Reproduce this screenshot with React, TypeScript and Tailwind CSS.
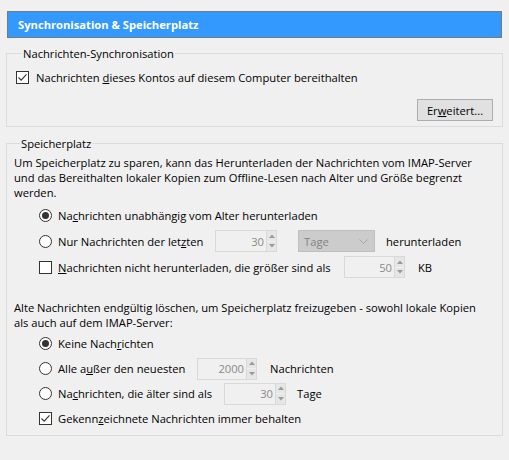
import type { ReactNode } from "react";

const font = "font-['Open_Sans',sans-serif] text-[11.2px] leading-[15px]";

function CheckBox({ checked }: { checked?: boolean }) {
  return (
    <span className="flex h-[13px] w-[13px] shrink-0 items-center justify-center border border-[#333333] bg-white">
      {checked && (
        <svg width="11" height="11" viewBox="0 0 11 11">
          <path d="M1.5 5.5 L4.2 8.2 L9.5 2.3" fill="none" stroke="#333333" strokeWidth="1.1" />
        </svg>
      )}
    </span>
  );
}

function Radio({ checked }: { checked?: boolean }) {
  return (
    <span className="flex h-[13px] w-[13px] shrink-0 items-center justify-center rounded-full border border-[#333333] bg-white">
      {checked && <span className="h-[7px] w-[7px] rounded-full bg-[#333333]" />}
    </span>
  );
}

function SpinBox({ value, width }: { value: string; width: string }) {
  return (
    <div className="flex h-[22px]">
      <div className={`flex items-center justify-end border border-[#d9d9d9] bg-[#f0f0f0] pr-[2px] text-[#8a8a8a] ${width}`}>{value}</div>
      <div className="flex w-[10px] flex-col gap-[1px] border border-l-0 border-[#d9d9d9] bg-[#f0f0f0]">
        <span className="flex flex-1 items-center justify-center bg-[#e6e6e6]">
          <svg width="6" height="4" viewBox="0 0 6 4"><path d="M0 4 L3 0.5 L6 4 Z" fill="#9a9a9a" /></svg>
        </span>
        <span className="flex flex-1 items-center justify-center bg-[#e6e6e6]">
          <svg width="6" height="4" viewBox="0 0 6 4"><path d="M0 0 L3 3.5 L6 0 Z" fill="#9a9a9a" /></svg>
        </span>
      </div>
    </div>
  );
}

function Row({ children, h = "h-[26px]" }: { children: ReactNode; h?: string }) {
  return <div className={`ml-[25px] flex items-center ${h}`}>{children}</div>;
}

export default function App() {
  return (
    <div className={`h-[460px] w-[509px] bg-[#f0f0f0] px-[6px] pt-[11px] text-black ${font}`}>
      <div className="mx-[1px] flex h-[27px] items-center border border-[#7a7a7a] bg-[#3399ff] pl-[10px] font-bold text-white">
        Synchronisation &amp; Speicherplatz
      </div>

      <fieldset className="mt-[8px] border border-[#dcdcdc] px-[9px] pb-[5px]">
        <legend className="ml-[6px] px-[1px]">Nachrichten-Synchronisation</legend>
        <div className="mt-[6px] flex h-[20px] items-center gap-[7px]">
          <CheckBox checked />
          <span>Nachrichten <u>d</u>ieses Kontos auf diesem Computer bereithalten</span>
        </div>
        <div className="mt-[12px] flex justify-end">
          <button className="h-[22px] w-[76px] border border-[#adadad] bg-[#e1e1e1] text-black">
            Er<u>w</u>eitert...
          </button>
        </div>
      </fieldset>

      <fieldset className="mt-[9px] border border-[#dcdcdc] px-[7px] pb-[4px]">
        <legend className="ml-[6px] px-[1px]">Speicherplatz</legend>
        <p className="mt-[4px] w-[476px]">
          Um Speicherplatz zu sparen, kann das Herunterladen der Nachrichten vom IMAP-Server und das Bereithalten lokaler
          Kopien zum Offline-Lesen nach Alter und Größe begrenzt werden.
        </p>
        <div className="mt-[2px]">
          <Row>
            <Radio checked />
            <span className="ml-[6px]">Na<u>c</u>hrichten unabhängig vom Alter herunterladen</span>
          </Row>
          <Row>
            <Radio />
            <span className="ml-[6px] w-[157px]">Nur Nachrichten der let<u>z</u>ten</span>
            <SpinBox value="30" width="w-[52px]" />
            <div className="ml-[21px] flex h-[22px] w-[77px] items-center justify-between border border-[#bfbfbf] bg-[#cccccc] pl-[5px] pr-[6px] text-[#838383]">
              Tage
              <svg width="9" height="5" viewBox="0 0 9 5"><path d="M0.5 0.5 L4.5 4.5 L8.5 0.5" fill="none" stroke="#a8a8a8" /></svg>
            </div>
            <span className="ml-[11px]">herunterladen</span>
          </Row>
          <Row>
            <CheckBox />
            <span className="ml-[6px] w-[286px]"><u>N</u>achrichten nicht herunterladen, die größer sind als</span>
            <SpinBox value="50" width="w-[51px]" />
            <span className="ml-[13px]">KB</span>
          </Row>
        </div>

        <p className="mt-[20px] w-[476px]">
          Alte Nachrichten endgültig löschen, um Speicherplatz freizugeben - sowohl lokale Kopien als auch auf dem IMAP-Server:
        </p>
        <div className="mt-[1px]">
          <Row h="h-[25px]">
            <Radio checked />
            <span className="ml-[6px]">Keine Nach<u>r</u>ichten</span>
          </Row>
          <Row h="h-[25px]">
            <Radio />
            <span className="ml-[6px] w-[139px]">Alle a<u>u</u>ßer den neuesten</span>
            <SpinBox value="2000" width="w-[50px]" />
            <span className="ml-[13px]">Nachrichten</span>
          </Row>
          <Row h="h-[25px]">
            <Radio />
            <span className="ml-[6px] w-[166px]">Na<u>c</u>hrichten, die älter sind als</span>
            <SpinBox value="30" width="w-[52px]" />
            <span className="ml-[11px]">Tage</span>
          </Row>
          <Row h="h-[25px]">
            <CheckBox checked />
            <span className="ml-[6px]">Gekenn<u>z</u>eichnete Nachrichten immer behalten</span>
          </Row>
        </div>
      </fieldset>
    </div>
  );
}
